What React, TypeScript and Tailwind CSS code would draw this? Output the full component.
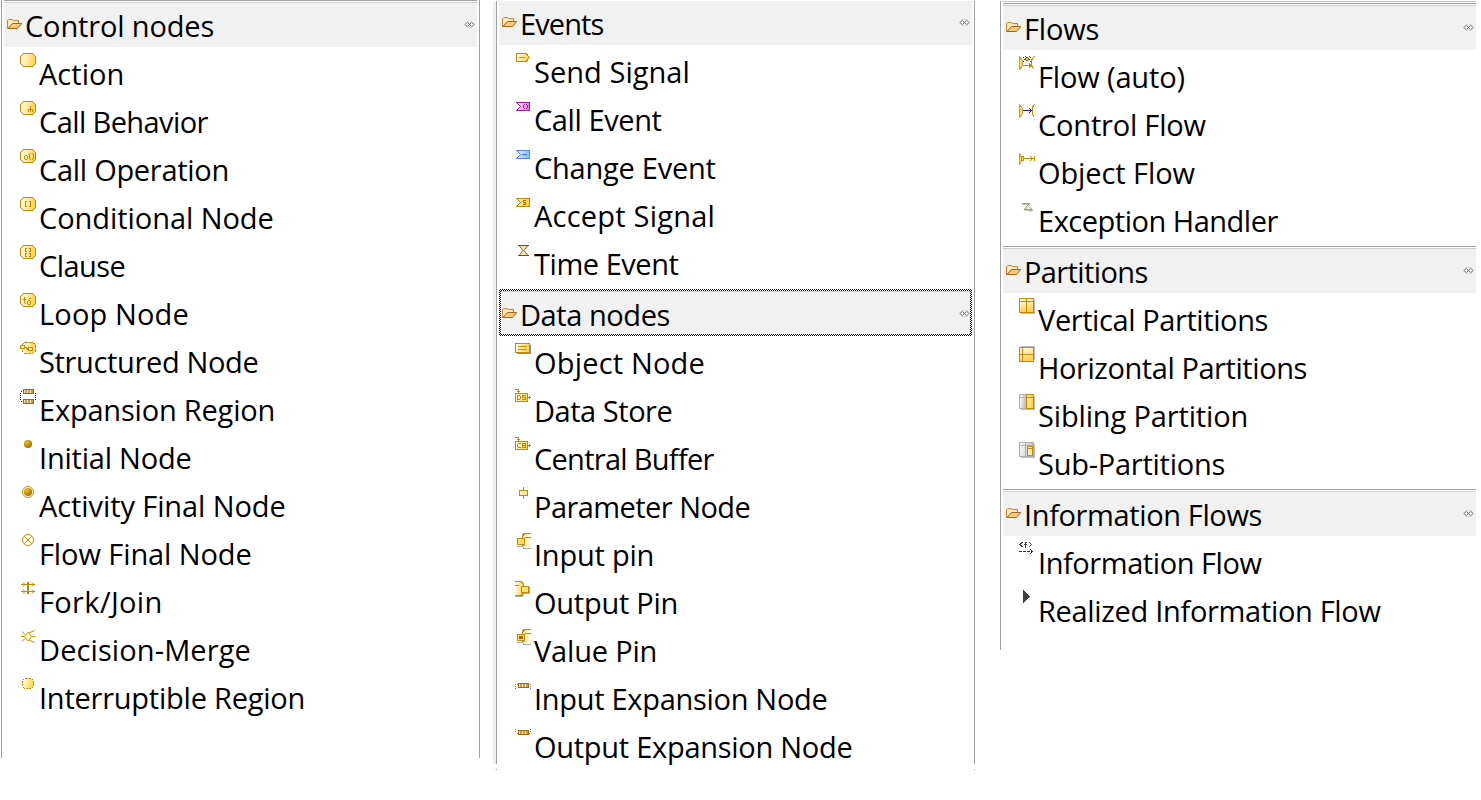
import React, { useLayoutEffect, useState } from "react";

const G = "#c08a0a";
const FONT = '400 29px "Open Sans"';

function Oct({ dash }: { dash?: boolean }) {
  return (
    <path
      d={dash ? "M4.5 2.5H12.5L15.5 4.5V11.5L12.5 13.5H4.5L2.5 11.5V4.5Z" : "M3.5 1.5H12.5L15.5 4.5V11.5L12.5 14.5H3.5L.5 11.5V4.5Z"}
      fill="url(#gold)"
      stroke={G}
      strokeDasharray={dash ? "3 1" : undefined}
    />
  );
}

const line = (d: string, color = G) => <path d={d} fill="none" stroke={color} />;

const cells = (y: number) => (
  <g>
    <rect x="3" y={y} width="11" height="5" fill="#a56a08" />
    <path d={`M4 ${y + 2.5}H6.5M7 ${y + 2.5}H10M10.5 ${y + 2.5}H13`} stroke="#c99a55" strokeWidth="3" />
    <path d={`M4 ${y + 2.5}H5M7 ${y + 2.5}H8M10 ${y + 2.5}H11`} stroke="#f6e6c4" strokeWidth="3" />
  </g>
);

const notch = (stroke: string, grad: string) => (
  <path d="M1.5 4.5H14.5V12.5H1.5L5.5 8.5Z" fill={`url(#${grad})`} stroke={stroke} />
);

const store = (
  <g>
    <path d="M.5 4.5H12.5V12.5H.5Z" fill="url(#gold)" stroke={G} />
    {line("M0 .5H3.5V4M2 2.5H5M13 8.5H16M14.5 7V10")}
  </g>
);

const pinLeft = (
  <g>
    <path d="M2 13H7L9 15.5H16M7 4V2L9 .5" fill="none" stroke="#a9a9a9" />
    <path d="M16 .5H10L7.5 3V12L10 14H16Z" fill="url(#goldRev)" />
    {line("M16 .5H10L7.5 3V5M10 4.5H16M7.5 12L9.5 13.5")}
    <path d="M2.5 5.5H9.5V11.5H2.5Z" fill="#ffdc68" stroke={G} />
  </g>
);

const bar = (
  <path d="M.5 1.5L3.5 5.5V10.5L.5 14.5Z" fill="#ffd860" stroke="#d1a02a" />
);

const icons: Record<string, React.ReactNode> = {
  action: <Oct />,
  behavior: <g><Oct />{line("M10.5 6V12M8 9.5H13M8.5 9V12M12.5 9V12")}</g>,
  operation: (
    <g>
      <Oct />
      {line("M5 7.5H7M5 11.5H7M4.5 8V11M7.5 8V11M10 5.5H11M9.5 6V11M10 11.5H11M12 5.5H13M13.5 6V11M12 11.5H13")}
    </g>
  ),
  conditional: <g><Oct />{line("M7 5.5H5.5V10.5H7M9 5.5H10.5V10.5H9")}</g>,
  clause: <g><Oct />{line("M7 4.5H5.5V7.5H7M9 4.5H10.5V7.5H9M7 9.5H5.5V12.5H7M9 9.5H10.5V12.5H9")}</g>,
  loop: <g><Oct />{line("M4.5 5V11M5 11.5H6M3 7.5H6M8 8.5H10M8 12.5H10M7.5 9V12M10.5 9V12M9 6.5H11")}</g>,
  structured: (
    <g>
      <Oct dash />
      <path d="M.5 5.5H4.5V8.5H.5ZM8.5 7.5H12.5V10.5H8.5Z" fill="#fff3c4" stroke={G} />
      {line("M5 7.5H6L8 9.5")}
    </g>
  ),
  expansion: (
    <g>
      <path d="M.5 5V13M15.5 5V13M1 3.5H15M1 13.5H15" fill="none" stroke="#111" strokeDasharray="1 1" />
      {cells(1)}
      {cells(11)}
    </g>
  ),
  initial: <circle cx="8" cy="8" r="4.1" fill="url(#ball)" shapeRendering="auto" />,
  final: (
    <g shapeRendering="auto">
      <circle cx="8" cy="8" r="5.5" fill="#fff" stroke={G} />
      <circle cx="8" cy="8" r="4.1" fill="url(#ball)" />
    </g>
  ),
  flowFinal: (
    <g shapeRendering="auto">
      <circle cx="8" cy="8" r="5.5" fill="#fffaf0" stroke={G} />
      {line("M4.3 4.3L11.7 11.7M11.7 4.3L4.3 11.7")}
    </g>
  ),
  fork: (
    <g shapeRendering="auto">
      <path d="M8 2V14" stroke={G} strokeWidth="2" />
      {line("M1 4.5H15M1 11.5H15M3 2.5L5 4.5L3 6.5M3 9.5L5 11.5L3 13.5M12 2.5L14 4.5L12 6.5M12 9.5L14 11.5L12 13.5")}
    </g>
  ),
  decision: (
    <g shapeRendering="auto">
      {line("M1 8.5H5M2 3.5L5.5 7M2 13.5L5.5 10M11 8.5H15M9 5L14.5 2.5M9 12L14.5 14.5")}
      <path d="M8 4L11.5 8.5L8 13L4.5 8.5Z" fill="#fff0b8" stroke="#cda33c" />
    </g>
  ),
  interruptible: <rect x="2.5" y="2.5" width="11" height="10" rx="3" fill="url(#gold)" stroke={G} strokeDasharray="2 1" />,
  send: <g><path d="M1.5 3.5H11L14.5 7.5L11 11.5H1.5Z" fill="url(#gold)" stroke={G} />{line("M4 7.5H10")}</g>,
  callEvent: <g>{notch("#a020a0", "purple")}{line("M8.5 7V10M9 6.5H10M9 10.5H10M11 6.5H12M12.5 7V10M11 10.5H12", "#a020a0")}</g>,
  changeEvent: <g>{notch("#5a7df0", "blue")}{line("M7 8.5H12", "#3f78d8")}</g>,
  acceptSignal: <g>{notch("#b8860b", "gold2")}{line("M11 6.5H8.5V8.5H10.5V10.5H8", "#a87400")}</g>,
  time: (
    <g shapeRendering="auto">
      <path d="M4 3.5H13L9 8.5L13 13.5H4L8 8.5Z" fill="#ffe6a0" stroke="#8a6238" />
      {line("M3 3.5H14M3 13.5H14", "#7a4c20")}
    </g>
  ),
  object: (
    <g>
      <path d="M2 12.5H15.5V4" fill="none" stroke="#8d8d8d" />
      <path d="M.5 2.5H14.5V11.5H.5Z" fill="url(#gold)" stroke={G} />
      {line("M3 5.5H12M3 8.5H12")}
    </g>
  ),
  dataStore: <g>{store}{line("M2.5 6V10.5H4.5L5.5 9.5V7.5L4.5 6.5H2.5M11 6.5H7.5V8.5H10.5V10.5H7")}</g>,
  buffer: <g>{store}{line("M6 6.5H3M2.5 7V10M3 10.5H6M7.5 6V10.5H10.5V6.5H7.5M8 8.5H10")}</g>,
  parameter: <g>{line("M8.5 2V14")}<path d="M4.5 5.5H12.5V10.5H4.5Z" fill="#ffec9f" stroke={G} /></g>,
  inputPin: pinLeft,
  outputPin: (
    <g>
      <path d="M0 15.5H7L9 14M9 12.5H14.5V6" fill="none" stroke="#a9a9a9" />
      <path d="M0 .5H6L8.5 3V12L6 14H0Z" fill="url(#gold)" />
      {line("M0 .5H6L8.5 3V5M0 4.5H4M0 14.5H6L8.5 12")}
      <path d="M6.5 5.5H13.5V11.5H6.5Z" fill="#ffe07a" stroke={G} />
    </g>
  ),
  valuePin: <g>{pinLeft}<rect x="4" y="7" width="4" height="3" fill="#a26a00" /></g>,
  inExpansion: <g>{cells(6)}{line("M0 7.5H1M.5 9V10M.5 11V12M1.5 7.5H3M15 7.5H16M15.5 9V10M15.5 11V12", "#777")}</g>,
  outExpansion: <g>{cells(5)}{line("M.5 4V5M.5 6V7M1.5 8.5H3M15.5 4V5M15.5 6V7M14 8.5H15", "#777")}</g>,
  flowAuto: (
    <g>
      {bar}
      {line("M4 10.5H12M10 8.5L12.5 10.5L10 12.5M15.5 1.5L12.5 5V11L15.5 14.5")}
      <path d="M4 2.5H5M5 4.5H6M4 6.5H5M11 2.5H12M10 4.5H11M11 6.5H12M6 1.5H7M10 1.5H11" stroke="#6c3520" />
      <path d="M7 2H9V3H10V5H9V6H7V5H6V3H7Z" fill="#c01c10" />
      <rect x="7" y="3" width="2" height="2" fill="#ffe600" />
    </g>
  ),
  controlFlow: <g>{bar}{line("M15.5 1.5L13.5 4V11L15.5 14.5")}{line("M4 7.5H13M10 5L12.5 7.5L10 10", "#1414f0")}</g>,
  objectFlow: (
    <g>
      <path d="M.5 2.5L2.5 5.5V10.5L.5 13.5Z" fill="#ffd860" stroke="#d1a02a" />
      <path d="M2.5 5.5H4.5V9.5H2.5Z" fill="#ffe89a" stroke={G} />
      {line("M5 7.5H15M11 5L13.5 7.5L11 10M15.5 5V10")}
    </g>
  ),
  exception: <g shapeRendering="auto">{line("M3 5.5H11L6 11.5H14", "#c9c9c9")}{line("M3 4.5H10.5L5 10.5H13M10.5 8L13 10.5L10.5 13", "#ae9050")}</g>,
  vertical: (
    <g>
      <path d="M2 15.5H15.5V2" fill="none" stroke="#bcbcbc" />
      <path d="M.5 .5H14.5V14.5H.5Z" fill="url(#goldV)" stroke={G} />
      {line("M0 3.5H14M7.5 0V14")}
    </g>
  ),
  horizontal: (
    <g>
      <path d="M2 .5H15.5V14" fill="none" stroke="#bcbcbc" />
      <path d="M.5 1.5H14.5V15.5H.5Z" fill="url(#goldV)" stroke={G} />
      {line("M3.5 1V15M0 8.5H14")}
    </g>
  ),
  sibling: (
    <g>
      <path d="M2 15.5H15.5V2" fill="none" stroke="#bcbcbc" />
      <path d="M.5 .5H7.5V14.5H.5Z" fill="url(#gray)" stroke="#b0b0b0" />
      <path d="M7.5 .5H14.5V14.5H7.5Z" fill="url(#gold2)" stroke={G} />
      {line("M0 3.5H7", "#b0b0b0")}
      {line("M7 3.5H14")}
    </g>
  ),
  sub: (
    <g>
      <path d="M2 15.5H15.5V2" fill="none" stroke="#bcbcbc" />
      <path d="M.5 .5H14.5V14.5H.5Z" fill="url(#gray)" stroke="#adadad" />
      {line("M0 3.5H14M6.5 0V14", "#adadad")}
      <path d="M8.5 4.5H13.5V13.5H8.5Z" fill="#fff0a8" stroke={G} />
      {line("M8 6.5H14")}
    </g>
  ),
  infoFlow: (
    <g>
      {line("M3.5 1L1 3.5L3.5 6M10 1L12.5 3.5L10 6M8 1.5H6.5V7M5 3.5H8", "#444")}
      {line("M0 10.5H3M4 10.5H7M8 10.5H11M12 10.5H14M11 8L13.5 10.5L11 13", "#333")}
    </g>
  ),
  realized: <path d="M4 1L11 7.5L4 14Z" fill="#404040" />,
};

function Icon({ name }: { name: string }) {
  return (
    <svg width="16" height="16" viewBox="0 0 16 16" shapeRendering="crispEdges" className="mt-px shrink-0">
      {icons[name]}
    </svg>
  );
}

function Folder() {
  return (
    <svg width="16" height="12" viewBox="0 0 16 12" className="mt-[15px] shrink-0">
      <path d="M.5 10V2.5L1.5 1.5H5L6.5 2.5H11.5V6H5L1 11Z" fill="#ffe9b8" stroke="#bd8340" />
      <path d="M1 10.5L5.5 5.5H14.7L10.5 10.5Z" fill="#f9ca78" stroke="#a9641c" strokeLinejoin="round" />
    </svg>
  );
}

function Pin() {
  return (
    <svg width="11" height="7" viewBox="0 0 11 7" className="mt-[18px] ml-auto shrink-0">
      <path d="M4 .5L1 3.5L4 6.5M7 .5L10 3.5L7 6.5M4 2.5H5M6 2.5H7M4 4.5H5M6 4.5H7M5 3.5H6" fill="none" stroke="#6a6a60" />
    </svg>
  );
}

/* Text whose tracking is adjusted so its ink ends `w` pixels after its origin. */
function Label({ text, w }: { text: string; w: number }) {
  const [tracking, setTracking] = useState(0);
  useLayoutEffect(() => {
    const ctx = document.createElement("canvas").getContext("2d");
    if (!ctx) return;
    ctx.font = FONT;
    setTracking((w - 1.5 - ctx.measureText(text).actualBoundingBoxRight) / (text.length - 1));
  }, [text, w]);
  return (
    <span className="text-[29px] leading-[46px] whitespace-nowrap text-black" style={{ letterSpacing: `${tracking}px` }}>
      {text}
    </span>
  );
}

type Item = [icon: string, text: string, width: number];

function Section({ title, w, items, rule = "line" }: { title: string; w: number; items: Item[]; rule?: "line" | "none" | "focus" }) {
  return (
    <section className="w-[473px]">
      {rule === "line" && <div className="h-[3px] border-t border-b border-t-[#a0a0a0] border-b-[#d0d0d0] bg-white" />}
      {rule === "focus" ? (
        <div className="mb-[4px] h-[47px] bg-[repeating-conic-gradient(#000_0%_25%,#fff_0%_50%)] bg-[length:2px_2px] p-[2px]">
          <div className="flex h-[43px] items-start border-t border-[#d4d4d4] bg-[#f1f1f1] pl-px">
            <Folder />
            <span className="w-[2px] shrink-0" />
            <Label text={title} w={w} />
            <Pin />
          </div>
        </div>
      ) : (
        <div className="mb-[4px] flex h-[44px] items-start bg-[#f1f1f1] pr-[2px] pl-[3px]">
          <Folder />
          <span className="w-[2px] shrink-0" />
          <Label text={title} w={w} />
          <Pin />
        </div>
      )}
      <ul>
        {items.map(([icon, text, width]) => (
          <li key={text} className="flex h-12 items-start gap-[3px] pl-4">
            <Icon name={icon} />
            <Label text={text} w={width} />
          </li>
        ))}
      </ul>
    </section>
  );
}

function Gradients() {
  const h = (id: string, a: string, b: string, v = false) => (
    <linearGradient id={id} x1="0" y1="0" x2={v ? "0.3" : "1"} y2={v ? "1" : "0.2"}>
      <stop offset="0.1" stopColor={a} />
      <stop offset="1" stopColor={b} />
    </linearGradient>
  );
  return (
    <svg className="absolute size-0">
      <defs>
        {h("gold", "#fffbe8", "#ffd54a")}
        {h("gold2", "#fff0b0", "#ffcf3c")}
        {h("goldRev", "#ffe48c", "#fffbea")}
        {h("goldV", "#fffbe4", "#ffd045", true)}
        {h("purple", "#fbe3fb", "#e07ce0")}
        {h("blue", "#e4f3ff", "#85c4ea")}
        {h("gray", "#fafafa", "#bdbdbd")}
        <radialGradient id="ball" cx="0.35" cy="0.3" r="0.8">
          <stop offset="0" stopColor="#e8c020" />
          <stop offset="1" stopColor="#9a6400" />
        </radialGradient>
      </defs>
    </svg>
  );
}

export default function App() {
  return (
    <main className="flex h-[800px] w-[1481px] items-start overflow-hidden bg-white font-['Open_Sans',sans-serif]">
      <Gradients />
      <div className="ml-px flex h-[758px] w-[479px] border-x border-[#a0a0a0] pl-[2px]">
        <Section
          title="Control nodes"
          w={190}
          items={[
            ["action", "Action", 85],
            ["behavior", "Call Behavior", 171],
            ["operation", "Call Operation", 190],
            ["conditional", "Conditional Node", 235],
            ["clause", "Clause", 87],
            ["loop", "Loop Node", 150],
            ["structured", "Structured Node", 220],
            ["expansion", "Expansion Region", 236],
            ["initial", "Initial Node", 153],
            ["final", "Activity Final Node", 247],
            ["flowFinal", "Flow Final Node", 213],
            ["fork", "Fork/Join", 123],
            ["decision", "Decision-Merge", 212],
            ["interruptible", "Interruptible Region", 266],
          ]}
        />
      </div>
      <div className="ml-[13px]">
        <div className="mt-px flex h-[763px] w-[482px] border-r border-[#a0a0a0]">
          <div className="mr-[2px] w-1 shrink-0 border-r border-[#a0a0a0] bg-[#f0f0f0]" />
          <div>
            <Section
              title="Events"
              w={85}
              rule="none"
              items={[
                ["send", "Send Signal", 155],
                ["callEvent", "Call Event", 129],
                ["changeEvent", "Change Event", 183],
                ["acceptSignal", "Accept Signal", 180],
                ["time", "Time Event", 146],
              ]}
            />
            <Section
              title="Data nodes"
              w={151}
              rule="focus"
              items={[
                ["object", "Object Node", 171],
                ["dataStore", "Data Store", 139],
                ["buffer", "Central Buffer", 182],
                ["parameter", "Parameter Node", 217],
                ["inputPin", "Input pin", 120],
                ["outputPin", "Output Pin", 144],
                ["valuePin", "Value Pin", 123],
                ["inExpansion", "Input Expansion Node", 294],
                ["outExpansion", "Output Expansion Node", 319],
              ]}
            />
          </div>
        </div>
        <div className="mt-[5px] h-px w-[482px] border-r border-[#a0a0a0]">
          <div className="h-px w-1 border-r border-[#a0a0a0] bg-[#f0f0f0]" />
        </div>
      </div>
      <div className="mt-px ml-[25px] h-[649px] border-l border-[#a0a0a0] pl-[2px]">
        <div className="h-[2px] border-t border-[#c4c4c4]" />
        <Section
          title="Flows"
          w={76}
          items={[
            ["flowAuto", "Flow (auto)", 148],
            ["controlFlow", "Control Flow", 170],
            ["objectFlow", "Object Flow", 159],
            ["exception", "Exception Handler", 242],
          ]}
        />
        <Section
          title="Partitions"
          w={125}
          items={[
            ["vertical", "Vertical Partitions", 231],
            ["horizontal", "Horizontal Partitions", 270],
            ["sibling", "Sibling Partition", 210],
            ["sub", "Sub-Partitions", 188],
          ]}
        />
        <Section
          title="Information Flows"
          w={239}
          items={[
            ["infoFlow", "Information Flow", 226],
            ["realized", "Realized Information Flow", 345],
          ]}
        />
      </div>
    </main>
  );
}
